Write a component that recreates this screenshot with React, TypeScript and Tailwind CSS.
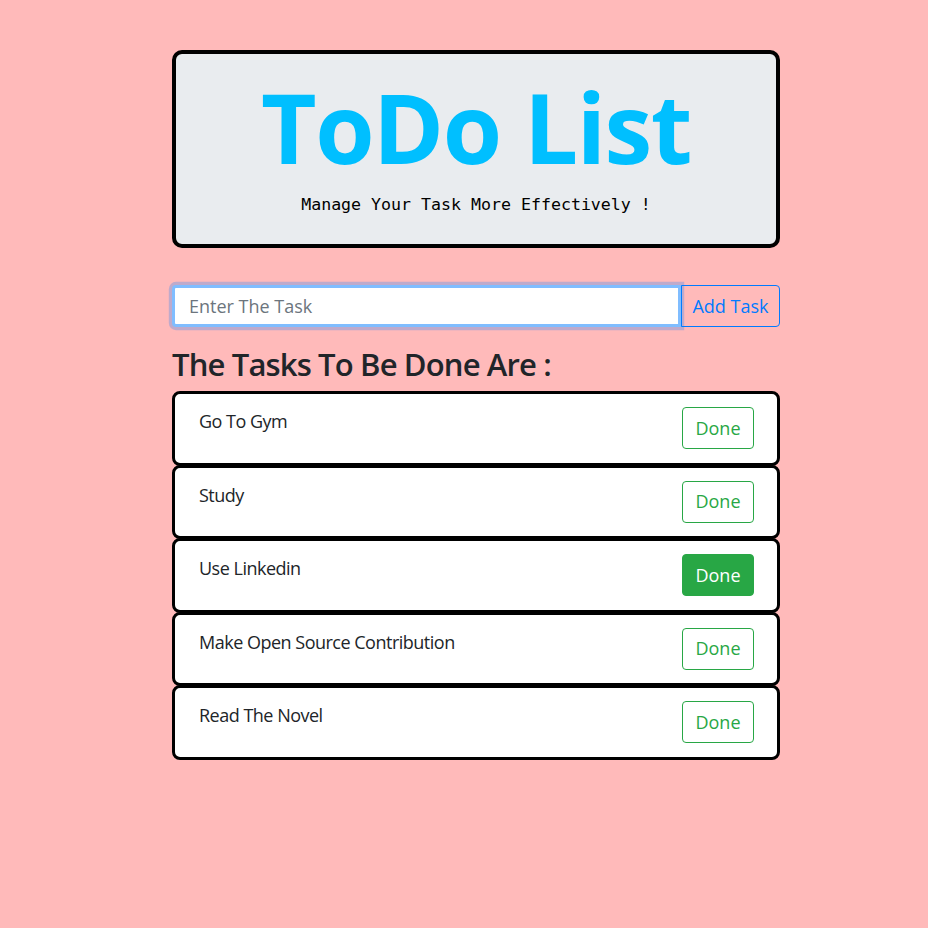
import React from "react";

const tasks = [
  { name: "Go To Gym", active: false },
  { name: "Study", active: false },
  { name: "Use Linkedin", active: true },
  { name: "Make Open Source Contribution", active: false },
  { name: "Read The Novel", active: false },
];

export default function App() {
  return (
    <div className="min-h-screen bg-[#ffbaba] font-['Open_Sans',sans-serif] text-[#212529]">
      <div className="ml-[172px] w-[608px] pt-[50px]">
        <div className="flex h-[198px] flex-col items-center rounded-[10px] border-4 border-black bg-[#e9ecef]">
          <h1 className="mt-[15px] text-[96px] font-bold leading-[1.2] tracking-[-1.5px] text-[#00bfff]">ToDo List</h1>
          <p className="mt-[9px] font-['DejaVu_Sans_Mono',monospace] text-[16.6px] leading-[24px] text-black">
            Manage Your Task More Effectively !
          </p>
        </div>

        <div className="mt-[37px] flex h-[42px]">
          <input
            className="h-[42px] flex-1 rounded-l-[4px] border-[3px] border-[#80bdff] bg-white pl-[14px] pr-[12px] text-[18px] text-[#495057] shadow-[0_0_0_0.2rem_rgba(0,123,255,0.25)] outline-none placeholder:text-[#6c757d]"
            placeholder="Enter The Task"
          />
          <button className="h-[42px] w-[99px] rounded-r-[4px] border border-[#007bff] bg-transparent text-[18px] text-[#007bff]">
            Add Task
          </button>
        </div>

        <h2 className="mt-[18px] text-[31px] font-semibold leading-[38px] tracking-[-0.85px]">The Tasks To Be Done Are :</h2>

        <div className="mt-[8px] flex flex-col">
          {tasks.map((t, i) => (
            <div
              key={t.name}
              className={
                (i > 0 ? "-mt-px " : "") +
                "flex h-[74.5px] items-start justify-between rounded-[8px] border-[3px] border-black bg-white pl-[24px] pr-[23px] pt-[13px]"
              }
            >
              <span className="mt-[1px] text-[18px] leading-[27px] tracking-[-0.5px]">{t.name}</span>
              <button
                className={
                  t.active
                    ? "h-[42px] w-[72px] rounded-[4px] border border-[#28a745] bg-[#28a745] text-[18px] text-white"
                    : "h-[42px] w-[72px] rounded-[4px] border border-[#28a745] bg-transparent text-[18px] text-[#28a745]"
                }
              >
                Done
              </button>
            </div>
          ))}
        </div>
      </div>
    </div>
  );
}
